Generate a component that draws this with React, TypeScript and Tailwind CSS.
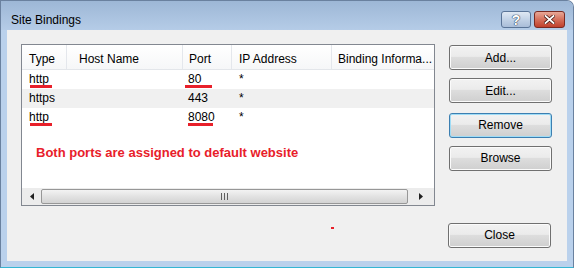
import React from 'react';

const rows = [
  { type: 'http', port: '80', mark: true, portMark: 'left-[2px] w-[27px]', shade: false },
  { type: 'https', port: '443', mark: false, portMark: '', shade: true },
  { type: 'http', port: '8080', mark: true, portMark: 'left-[5px] w-[25px]', shade: false },
];

function Mark({ className }: { className: string }) {
  return <span className={`absolute top-[15px] h-[3px] bg-[#e8202a] ${className}`} />;
}

function DlgButton({ label, focused = false }: { label: string; focused?: boolean }) {
  return (
    <button
      className={`w-[103px] h-[25px] rounded-[3px] border text-[12px] text-black bg-[linear-gradient(#f2f2f2_0%,#ebebeb_45%,#dddddd_50%,#cfcfcf_100%)] ${
        focused
          ? 'border-[#3c7fb1] shadow-[inset_0_0_0_1px_#9fdcf6]'
          : 'border-[#707070] shadow-[inset_0_0_0_1px_#fbfbfb]'
      }`}
    >
      {label}
    </button>
  );
}

function ListView() {
  return (
    <div className="w-[414px] h-[162px] border border-[#828790] bg-white flex flex-col">
      {/* header */}
      <div className="h-[25px] flex border-b border-[#e3e6ea] bg-[linear-gradient(#ffffff,#f6f7f8)] text-[12px] text-black whitespace-nowrap">
        <div className="w-[45px] pl-[7px] pt-[5px] border-r border-[#e4e7ec]">Type</div>
        <div className="w-[116px] pl-[12px] pt-[5px] border-r border-[#e4e7ec]">Host Name</div>
        <div className="w-[49px] pl-[6px] pt-[5px] border-r border-[#e4e7ec]">Port</div>
        <div className="w-[100px] pl-[7px] pt-[5px] border-r border-[#e4e7ec]">IP Address</div>
        <div className="flex-1 pl-[6px] pt-[5px] overflow-hidden">Binding Informa...</div>
      </div>

      {rows.map((r, i) => (
        <div key={i} className={`h-[19px] flex text-[12px] leading-[19px] text-black ${r.shade ? 'bg-[#f0f0f0]' : ''}`}>
          <div className="w-[45px] pl-[7px] relative">
            {r.type}
            {r.mark && <Mark className="left-[8px] w-[22px]" />}
          </div>
          <div className="w-[116px]" />
          <div className="w-[49px] pl-[5px] relative">
            {r.port}
            {r.mark && <Mark className={r.portMark} />}
          </div>
          <div className="w-[100px] pl-[7px]">*</div>
          <div className="flex-1" />
        </div>
      ))}

      <div className="flex-1">
        <p className="mt-[18px] ml-[14px] text-[13px] leading-[16px] font-bold text-[#e8202a]">
          Both ports are assigned to default website
        </p>
      </div>

      {/* horizontal scrollbar */}
      <div className="h-[17px] flex items-center bg-[#ececec]">
        <div className="w-[19px] flex justify-center">
          <svg width="4" height="7" viewBox="0 0 4 7">
            <path d="M4 0 L0 3.5 L4 7 Z" fill="#202020" />
          </svg>
        </div>
        <div className="flex-1 h-[15px] rounded-[2px] border border-[#979797] bg-[linear-gradient(#f3f3f3,#e2e2e2_50%,#d3d3d3)] flex items-center justify-center gap-[2px]">
          <span className="w-px h-[7px] bg-[#606060]" />
          <span className="w-px h-[7px] bg-[#606060]" />
          <span className="w-px h-[7px] bg-[#606060]" />
        </div>
        <div className="w-[26px] flex justify-center">
          <svg width="4" height="7" viewBox="0 0 4 7">
            <path d="M0 0 L4 3.5 L0 7 Z" fill="#202020" />
          </svg>
        </div>
      </div>
    </div>
  );
}

export default function App() {
  return (
    <div className="w-[576px] h-[268px] bg-white overflow-hidden font-['Liberation_Sans',Arial,sans-serif]">
      <div className="w-[574px] h-[268px] flex flex-col rounded-tr-[7px] border-t border-r border-l border-[#6a819f] border-b border-b-[#35b6d3] bg-[#bad1ec]">
        {/* title bar */}
        <div className="h-[29px] flex items-start bg-[linear-gradient(#9db7d6,#b5cce7)] rounded-tr-[6px]">
          <span className="ml-[10px] mt-[11px] text-[12px] leading-[16px] text-black">Site Bindings</span>
          <div className="ml-auto mr-[8px] mt-[10px] flex gap-[3px]">
            <div className="w-[30px] h-[17px] rounded-[3px] border border-[#5a7497] bg-[linear-gradient(#dfe8f3,#c2d2e6_50%,#a9bdd8)] flex items-center justify-center">
              <span className="text-[14px] font-bold leading-none text-white [text-shadow:0_0_1px_#2d3f58,0_0_1px_#2d3f58,0_0_1px_#2d3f58]">?</span>
            </div>
            <div className="w-[31px] h-[17px] rounded-[3px] border border-[#7a2a22] bg-[linear-gradient(#e8a898,#d5705c_50%,#c0402c)] flex items-center justify-center">
              <svg width="11" height="9" viewBox="0 0 11 9">
                <path d="M1.5 1 L9.5 8 M9.5 1 L1.5 8" stroke="#4a1a14" strokeWidth="3.4" strokeLinecap="square" />
                <path d="M1.5 1 L9.5 8 M9.5 1 L1.5 8" stroke="#ffffff" strokeWidth="1.8" strokeLinecap="square" />
              </svg>
            </div>
          </div>
        </div>

        {/* client area */}
        <div className="h-[231px] ml-[6px] mr-[6px] bg-[#f0f0f0] pl-[14px] pt-[14px] flex flex-col">
          <div className="flex">
            <ListView />
            <div className="ml-[14px] mt-[1px] flex flex-col gap-[8px]">
              <DlgButton label="Add..." />
              <DlgButton label="Edit..." />
              <div className="mt-[1px]">
                <DlgButton label="Remove" focused />
              </div>
              <DlgButton label="Browse" />
            </div>
          </div>
          <div className="flex items-start mt-[16px]">
            <span className="ml-[310px] mt-[5px] w-[3px] h-[2px] bg-[#e8202a]" />
            <div className="ml-[114px]">
              <DlgButton label="Close" />
            </div>
          </div>
        </div>
      </div>
    </div>
  );
}
